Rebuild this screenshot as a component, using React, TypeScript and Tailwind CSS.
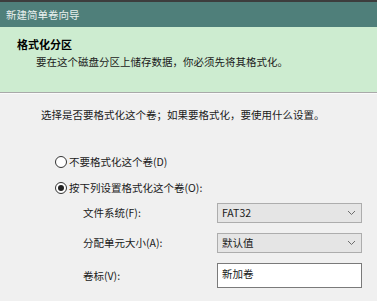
import React from "react";

const font = {
  fontFamily: '"Noto Sans CJK SC", "Microsoft YaHei", "Liberation Sans", sans-serif',
};

const Chevron = () => (
  <svg width="9" height="6" viewBox="0 0 9 6" className="text-[#6d6d6d]">
    <polyline points="1,1 4.5,4.5 8,1" fill="none" stroke="currentColor" strokeWidth="1" />
  </svg>
);

const Radio = ({ checked, label }: { checked?: boolean; label: string }) => (
  <div className="flex h-[16px] items-center">
    <span className="ml-[55px] flex h-[12px] w-[12px] items-center justify-center rounded-full border border-[#333] bg-white">
      {checked && <span className="h-[6px] w-[6px] rounded-full bg-[#222]" />}
    </span>
    <span className="ml-[2px]">{label}</span>
  </div>
);

const Select = ({ value }: { value: string }) => (
  <div className="flex h-[20px] w-[145px] items-center justify-between border border-[#adadad] bg-[#e5e5e5] pl-[4px] pr-[5px]">
    <span>{value}</span>
    <Chevron />
  </div>
);

export default function App() {
  return (
    <div
      className="h-[301px] w-[377px] overflow-hidden bg-[#f0f0f0] text-[10.5px] leading-[16px] text-[#1a1a1a]"
      style={font}
    >
      <div className="h-[2px] bg-[#3d3d3d]" />
      <div className="flex h-[25px] items-center bg-[#4f7f7a] pl-[6px] text-[#e8f0ee]">
        新建简单卷向导
      </div>

      <div className="h-[65px] bg-[#cdecd0] pt-[9px]">
        <div className="pl-[17px] text-[11px] font-bold leading-[17px] text-black">格式化分区</div>
        <div className="pl-[36px] leading-[17px]">要在这个磁盘分区上储存数据，你必须先将其格式化。</div>
      </div>
      <div className="h-px bg-[#a9a9a9]" />
      <div className="h-px bg-[#fafafa]" />

      <div className="pt-[13px]">
        <div className="pl-[41px]">选择是否要格式化这个卷；如果要格式化，要使用什么设置。</div>

        <div className="mt-[31px] flex flex-col gap-[10px]">
          <Radio label="不要格式化这个卷(D)" />
          <Radio checked label="按下列设置格式化这个卷(O):" />
        </div>

        <div className="mt-[7px] flex flex-col gap-[10px] pl-[83px]">
          <div className="flex items-center">
            <span className="w-[134px]">文件系统(F):</span>
            <Select value="FAT32" />
          </div>
          <div className="flex items-center">
            <span className="w-[134px]">分配单元大小(A):</span>
            <Select value="默认值" />
          </div>
          <div className="flex items-center">
            <span className="w-[134px]">卷标(V):</span>
            <div className="flex h-[25px] w-[145px] items-start border border-[#7a7a7a] bg-white pl-[4px] pt-[2px]">
              新加卷
            </div>
          </div>
          <div className="mt-[1px] flex items-center text-[#9a9a9a]">
            <span className="mr-[4px] h-[12px] w-[12px] border border-[#999] bg-white" />
            <span>执行快速格式化(P)</span>
          </div>
        </div>
      </div>
    </div>
  );
}
